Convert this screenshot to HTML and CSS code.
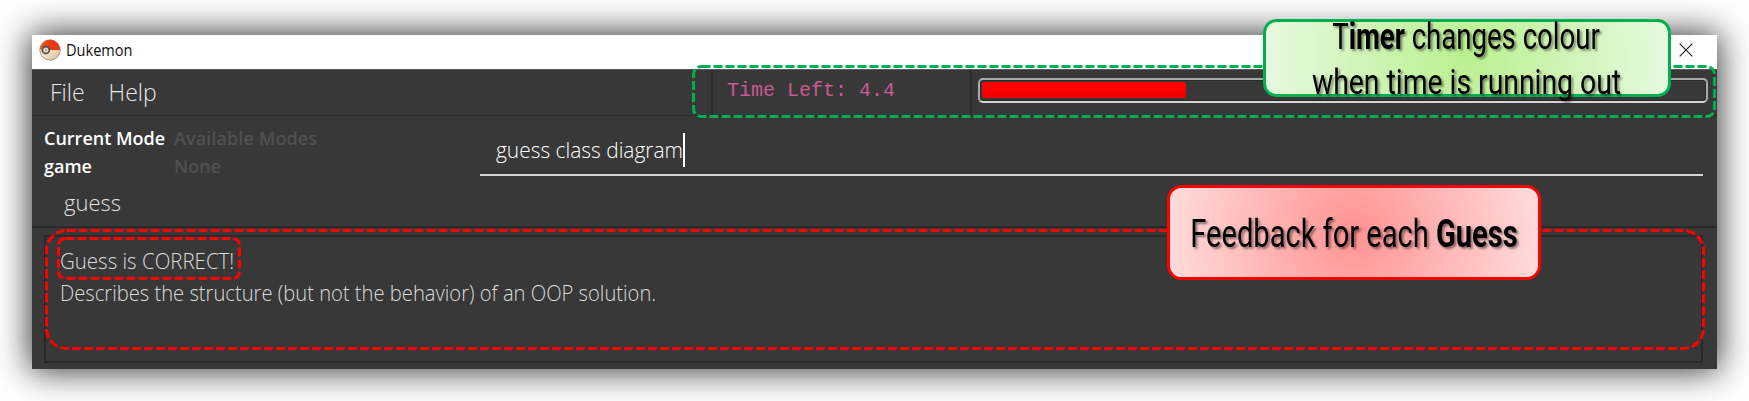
FILE: index.html
```html
<!DOCTYPE html>
<html lang="en">
<head>
<meta charset="utf-8">
<title>Dukemon</title>
<link rel="stylesheet" href="styles.css">
</head>
<body>
<main class="window">
  <header class="titlebar">
    <svg class="logo" viewBox="0 0 22 22">
      <defs>
        <linearGradient id="ballTop" x1="0" x2="1"><stop offset="0" stop-color="#f0601c"/><stop offset=".5" stop-color="#e83a10"/><stop offset="1" stop-color="#e23c14"/></linearGradient>
        <linearGradient id="ballLow" x1="0" y1="0" x2="1" y2="1"><stop offset=".4" stop-color="#f6efcb"/><stop offset="1" stop-color="#d8b49c"/></linearGradient>
      </defs>
      <circle cx="11" cy="11" r="10.2" fill="url(#ballLow)" stroke="#a58a80" stroke-width=".9"/>
      <path d="M.9 10C1.5 4.400 6 .8 11 .8S20.800 5 21.200 11L9 11Q4 11.500 .9 10Z" fill="url(#ballTop)"/>
      <circle cx="6.800" cy="11" r="3.500" fill="#e9dfd0" stroke="#56504f" stroke-width="1.800"/>
      <circle cx="6.800" cy="11" r="1.200" fill="#b9a89c"/>
    </svg>
    <span class="app-name">Dukemon</span>
    <svg class="close" viewBox="0 0 14 14"><path d="M.7.7 13.300 13.300M13.300.7.7 13.300" stroke="#222" stroke-width="1.200"/></svg>
  </header>
  <section class="toolbar">
    <nav class="menu"><span class="file">File</span><span class="help">Help</span></nav>
    <div class="timer">Time Left: 4.4</div>
    <div class="progress-pane"><div class="track"><div class="fill"></div></div></div>
  </section>
  <section class="command">
    <div class="side">
      <div class="modes">
        <div class="current"><p>Current Mode</p><p>game</p></div>
        <div class="available"><p>Available Modes</p><p>None</p></div>
      </div>
      <div class="suggestion"><span>guess</span></div>
    </div>
    <div class="input"><span class="typed">guess class diagram</span><i class="caret"></i></div>
  </section>
  <section class="result-pane">
    <div class="result"><p class="verdict">Guess is CORRECT!</p><p class="detail">Describes the structure (but not the behavior) of an OOP solution.</p></div>
  </section>
</main>
<svg class="annotations" width="1749" height="401" viewBox="0 0 1749 401">
  <defs>
    <radialGradient id="greenGlow" gradientUnits="userSpaceOnUse" cx="1467" cy="58" r="205"><stop offset="0" stop-color="#baf08f"/><stop offset="1" stop-color="#e6f9df"/></radialGradient>
    <radialGradient id="redGlow" gradientUnits="userSpaceOnUse" cx="1354" cy="232" r="190"><stop offset="0" stop-color="#ff9292"/><stop offset="1" stop-color="#ffdcdc"/></radialGradient>
  </defs>
  <rect class="outline green" x="693.5" y="66.5" width="1021" height="50" rx="8"/>
  <rect class="outline red" x="46.5" y="230.5" width="1657" height="118" rx="20"/>
  <rect class="outline red" x="58.5" y="238.5" width="181" height="40" rx="7"/>
  <rect class="callout" x="1264.500" y="20.500" width="405" height="75" rx="12" fill="url(#greenGlow)" stroke="#00b050"/>
  <rect class="callout" x="1168.500" y="186.500" width="371" height="92" rx="13" fill="url(#redGlow)" stroke="#f00"/>
  <g class="note">
    <text transform="translate(1466 49) scale(.766 1)">T<tspan class="strong">imer</tspan> changes colour</text>
    <text transform="translate(1466.500 94) scale(.787 1)">when time is running out</text>
    <text class="large" transform="translate(1354 247) scale(.765 1)">Feedback for each <tspan class="strong">Guess</tspan></text>
  </g>
</svg>
</body>
</html>
```
FILE: styles.css
```css
* { box-sizing: border-box; }
body { margin: 0; width: 1749px; height: 401px; padding: 35px 32px 0; background: #fff; overflow: hidden; position: relative; font-family: "Open Sans", "Noto Sans", sans-serif; }
p { margin: 0; }
span, p { white-space: nowrap; }
.window { width: 1685px; height: 334px; background: #383838; box-shadow: 0 0 32px 2px rgba(0,0,0,.8); }
.titlebar { height: 34px; background: #fff; display: flex; align-items: center; padding: 0 24px 4px 7px; }
.logo { width: 22px; height: 22px; }
.app-name { margin-left: 5px; font-size: 16px; color: #111; transform: scaleX(.91); transform-origin: left; }
.close { width: 14px; height: 14px; margin-left: auto; }
.toolbar { height: 47px; border-top: 1px solid #585858; border-bottom: 1px solid #2a2a2a; display: grid; grid-template-columns: 679px 259px 1fr; }
.menu { display: flex; padding-left: 18px; font-size: 23px; line-height: 44px; font-weight: 300; color: #e8e8e8; }
.help { margin-left: 24px; }
.timer { border-left: 2px solid #2e2e2e; padding-left: 14px; font: 20px/41px "Liberation Mono", monospace; color: #c75a92; }
.progress-pane { border-left: 2px solid #2e2e2e; padding: 8px 9px 0 6px; }
.track { height: 25px; border: 2px solid #aaa; border-bottom-color: #d5d5d5; border-radius: 5px; padding: 2px; box-shadow: inset 0 0 0 1px #2a2a2a; }
.fill { width: 204px; height: 16px; border-radius: 2px; background: linear-gradient(#f00, #f00 50%, #e80000); }
.command { height: 112px; border-bottom: 2px solid #2a2a2a; display: grid; grid-template-columns: 448px 1223px; }
.modes { display: flex; padding: 8px 0 0 12px; font-size: 18px; font-weight: 600; line-height: 28px; color: #fff; }
.current { width: 130px; }
.available { color: #505050; letter-spacing: .1px; }
.suggestion { padding-left: 32px; font-size: 22px; line-height: 44px; font-weight: 300; color: #e0e0e0; }
.input { height: 60px; border-bottom: 2px solid #d4d4d0; padding: 17px 0 0 16px; display: flex; font-size: 22px; line-height: 33px; font-weight: 300; color: #fff; }
.typed { width: 187px; transform: scaleX(.95); transform-origin: left; }
.caret { width: 1.500px; height: 34px; background: #fff; }
.result-pane { padding: 7px 14px 0 12px; }
.result { height: 128px; border: 2px solid #2a2a2a; padding: 8px 15px; font-size: 22px; line-height: 31.500px; font-weight: 300; color: #dcdcdc; }
.verdict, .detail { width: max-content; transform-origin: left; }
.verdict { transform: translateX(-1px) scaleX(.93); }
.detail { transform: translateX(-1px) scaleX(.917); }
.annotations { position: absolute; left: 0; top: 0; }
.outline { fill: none; stroke-width: 3; stroke-dasharray: 9 3; }
.green { stroke: #00b050; }
.red { stroke: #f00; }
.callout { stroke-width: 3; }
.note { font-family: Roboto, sans-serif; font-size: 36px; fill: #000; text-anchor: middle; filter: drop-shadow(2px 2px 1px rgba(0,0,0,.45)); }
.large { font-size: 38px; }
.strong { font-weight: 700; }
```
